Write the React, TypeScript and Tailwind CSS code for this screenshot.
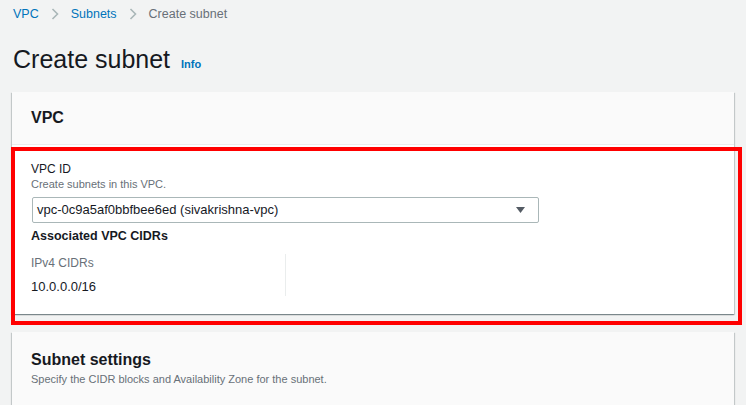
import React from 'react';

function Chevron() {
  return (
    <svg width="8" height="12" viewBox="0 0 8 12" className="mx-[12px] shrink-0">
      <path d="M1.5 1 L6.5 6 L1.5 11" fill="none" stroke="#aab7b8" strokeWidth="1.6" />
    </svg>
  );
}

const cardShadow =
  'shadow-[0_1px_1px_0_rgba(0,28,36,0.3),1px_1px_1px_0_rgba(0,28,36,0.15),-1px_1px_1px_0_rgba(0,28,36,0.15)]';

function App() {
  return (
    <div className="relative min-h-screen bg-[#f2f3f3] font-['Liberation_Sans',Arial,sans-serif] text-[#16191f] overflow-hidden">
      {/* Breadcrumbs */}
      <nav className="flex items-center pl-[13px] pt-[6px] h-[22px] text-[12.5px] leading-4">
        <a href="#" className="text-[#0073bb]">VPC</a>
        <Chevron />
        <a href="#" className="text-[#0073bb]">Subnets</a>
        <Chevron />
        <span className="text-[#687078]">Create subnet</span>
      </nav>

      {/* Page header */}
      <div className="flex items-baseline pl-[13px] mt-[22px] mb-[18px]">
        <h1 className="text-[25px] leading-[30px] font-normal">Create subnet</h1>
        <a href="#" className="ml-[11px] text-[11px] font-bold text-[#0073bb]">Info</a>
      </div>

      {/* VPC container */}
      <section className={`mx-3 bg-white ${cardShadow}`}>
        <div className="h-[53px] flex items-center px-[19px] bg-[#fafafa] border-b border-[#eaeded]">
          <h2 className="text-[16px] font-bold leading-5">VPC</h2>
        </div>
        <div className="px-[19px] pt-[16px] pb-[18px]">
          <div className="text-[12px] leading-4">VPC ID</div>
          <div className="text-[11px] leading-[14px] text-[#687078]">Create subnets in this VPC.</div>
          <div className="mt-[6px] ml-px w-[507px] h-[26px] flex items-center justify-between border border-[#aab7b8] rounded-[2px] pl-[4px] pr-[13px] bg-white">
            <span className="text-[13px] leading-4">vpc-0c9a5af0bbfbee6ed (sivakrishna-vpc)</span>
            <svg width="9" height="6" viewBox="0 0 9 6">
              <path d="M0 0 H9 L4.5 6 Z" fill="#545b64" />
            </svg>
          </div>
          <h3 className="mt-[5px] text-[12.5px] font-bold leading-4">Associated VPC CIDRs</h3>
          <div className="mt-[10px] flex">
            <div className="w-[255px] border-r border-[#eaeded]">
              <div className="text-[12px] leading-4 text-[#687078] pt-px">IPv4 CIDRs</div>
              <div className="mt-[7px] text-[13px] leading-[18px]">10.0.0.0/16</div>
            </div>
          </div>
        </div>
      </section>

      {/* Subnet settings container */}
      <section className={`mx-3 mt-[18px] bg-[#fafafa] ${cardShadow}`}>
        <div className="px-[19px] pt-[18px] pb-6">
          <h2 className="text-[16px] font-bold leading-5">Subnet settings</h2>
          <p className="mt-[2px] text-[11px] leading-[14px] text-[#687078]">
            Specify the CIDR blocks and Availability Zone for the subnet.
          </p>
        </div>
      </section>

      {/* Highlight annotation */}
      <div className="absolute left-[11px] top-[147px] w-[731px] h-[178px] border-4 border-[#ff0000] pointer-events-none" />
    </div>
  );
}

export default App;
